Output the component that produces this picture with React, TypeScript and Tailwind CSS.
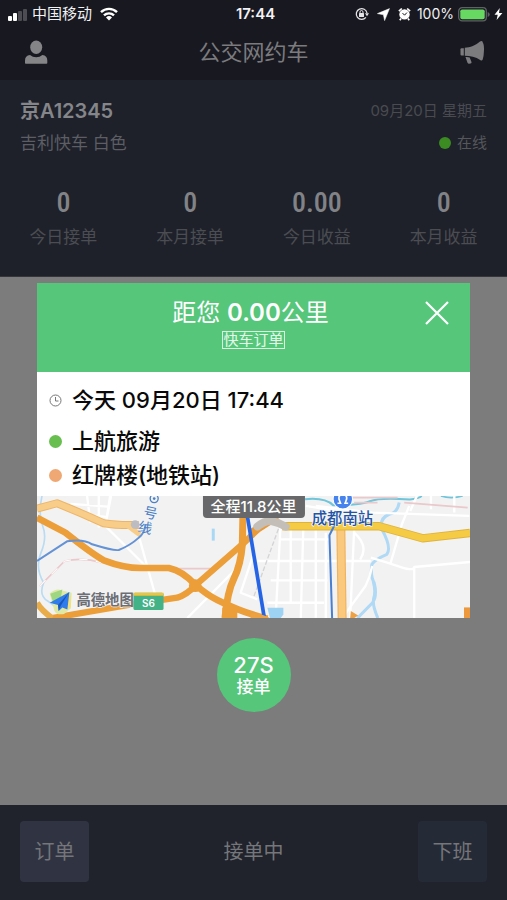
import type { ReactNode } from 'react';

const stats = [
  { value: '0', label: '今日接单' },
  { value: '0', label: '本月接单' },
  { value: '0.00', label: '今日收益' },
  { value: '0', label: '本月收益' },
];

function StatusBar() {
  return (
    <div className="grid h-7 grid-cols-[1fr_auto_1fr] items-center pr-1 pl-2 text-[14px] leading-5 text-[#f1f1f3]">
      <div className="flex items-center">
        <svg width="20" height="13" viewBox="0 0 20 13" aria-hidden="true">
          <rect x="0" y="8" width="4" height="5" rx="1" fill="#fff" />
          <rect x="5" y="5" width="4" height="8" rx="1" fill="#fff" />
          <rect x="10" y="3" width="4" height="10" rx="1" fill="#4c4c52" />
          <rect x="15" y="1" width="4" height="12" rx="1" fill="#4c4c52" />
        </svg>
        <span className="ml-1 text-[15px]">中国移动</span>
        <svg className="ml-2" width="18" height="14" viewBox="0 0 18 14" aria-hidden="true">
          <g fill="none" stroke="#fff" strokeWidth="2.4">
            <path d="M1 5.2a11.3 11.3 0 0 1 16 0" />
            <path d="M4 8.4a7.1 7.1 0 0 1 10 0" />
          </g>
          <path d="M6 10.4a4.3 4.3 0 0 1 6 0L9 13.6Z" fill="#fff" />
        </svg>
      </div>
      <span className="text-[15px] font-semibold">17:44</span>
      <div className="flex items-center justify-end">
        <svg width="14" height="14" viewBox="0 0 14 14" aria-hidden="true">
          <path d="M10.9 10.4A5.4 5.4 0 1 1 12 6" fill="none" stroke="#e4e4e6" strokeWidth="1.3" />
          <path d="M10 6.2h4l-2 3Z" fill="#e4e4e6" />
          <rect x="4" y="6" width="5" height="4" rx=".5" fill="#e4e4e6" />
          <path d="M5 6V5a1.5 1.5 0 0 1 3 0v1" fill="none" stroke="#e4e4e6" />
        </svg>
        <svg className="ml-2" width="13" height="13" viewBox="0 0 13 13" aria-hidden="true">
          <path d="M12.500.6 7.600 12.600 6.400 6.800.4 5.600Z" fill="#fff" stroke="#fff" strokeWidth=".5" />
        </svg>
        <svg className="ml-2" width="13" height="14" viewBox="0 0 13 14" aria-hidden="true">
          <circle cx="6.5" cy="7.4" r="5.2" fill="#fff" />
          <path d="M.9 4.2 3.8 1.5M12.1 4.2 9.2 1.5M3 11.6l-1.2 1.6M10 11.6l1.2 1.6" stroke="#fff" strokeWidth="1.700" />
          <path d="M6.6 8.2 4.5 6.1M6.5 8.2l2.400-2.600" stroke="#181820" strokeWidth="1" />
        </svg>
        <span className="ml-1.5">100%</span>
        <svg className="ml-1" width="32" height="15" viewBox="0 0 32 15" aria-hidden="true">
          <rect x=".7" y=".7" width="27.6" height="13.2" rx="3.4" fill="none" stroke="#606067" strokeWidth="1.3" />
          <rect x="2.3" y="2.4" width="24.4" height="9.8" rx="1.8" fill="#67d963" />
          <path d="M29.7 5v5q2-.8 2-2.5t-2-2.5Z" fill="#606067" />
        </svg>
        <svg className="ml-1" width="9" height="12" viewBox="0 0 9 12" aria-hidden="true">
          <path d="M5.8 0 .5 6.8h3.2L2.6 12l5.8-7.1H5Z" fill="#fff" />
        </svg>
      </div>
    </div>
  );
}

function NavBar() {
  return (
    <header className="grid h-[52px] grid-cols-[1fr_auto_1fr] items-center px-5 pb-1">
      <button type="button" aria-label="个人中心" className="justify-self-start p-1">
        <svg width="24" height="24" viewBox="0 0 24 24" fill="#858587">
          <ellipse cx="12.2" cy="7.2" rx="6" ry="6.7" />
          <path d="M1 23v-2.500Q1 15.600 6 15q2.600 2.300 6.200 2.300T18.400 15q4.900.6 4.900 5.500V23q0 .8-.8.8H1.700Q1 23.800 1 23Z" />
        </svg>
      </button>
      <h1 className="text-[22px] leading-8 text-[#7b7b7e]">公交网约车</h1>
      <button type="button" aria-label="公告" className="justify-self-end">
        <svg width="28" height="24" viewBox="0 0 28 24" fill="#7c7c7f">
          <path d="M2.500 8.200h2.300v7.400H2.500q-1 0-1-1V9.200q0-1 1-1Z" />
          <path d="M5.800 7.800C11 7.800 17 5 21 1.600q2.200-1.300 2.800.8 1.600 2.600 1.100 9.200-.1 5.600-1.300 8.200-.8 1.400-2.400.2C17 17 11 15.800 5.800 15.800Z" />
          <path d="M6.500 17.100q2.600-.2 4.200.3l1.700 4.300q.7 1.600-.9 1.900l-1.500.1q-1 0-1.500-1Z" />
        </svg>
      </button>
    </header>
  );
}

function DriverPanel() {
  return (
    <section className="border-b border-[#35353c] bg-[#1e212a] pt-[17px] pb-[25px]">
      <div className="flex items-center justify-between px-5">
        <h2 className="text-[20px] leading-7 font-semibold text-[#85868a]">京A12345</h2>
        <span className="text-[15px] leading-7 text-[#494b50]">09月20日 星期五</span>
      </div>
      <div className="mt-1 flex items-center justify-between px-5">
        <span className="text-[17px] leading-7 text-[#5c5e64]">吉利快车 白色</span>
        <span className="flex items-center gap-1.5 text-[15px] leading-7 text-[#55575b]">
          <i className="size-3 rounded-full bg-[#3b8a22]" />
          在线
        </span>
      </div>
      <dl className="mt-7 grid grid-cols-4 text-center">
        {stats.map((s) => (
          <div key={s.label} className="flex flex-col-reverse">
            <dt className="text-[17px] leading-7 text-[#4b4d52]">{s.label}</dt>
            <dd className="mb-0.5 font-['Liberation_Sans_Narrow','Roboto_Condensed',Roboto,sans-serif] text-[28px] leading-9 font-medium text-[#828387]">
              {s.value}
            </dd>
          </div>
        ))}
      </dl>
    </section>
  );
}

function RouteMap() {
  return (
    <div className="relative h-[122px] overflow-hidden">
      <svg
        className="size-full"
        viewBox="0 0 1297 366"
        preserveAspectRatio="xMidYMid slice"
        role="img"
        aria-label="路线地图"
      >
        <rect width="1297" height="366" fill="#f2f2f3" />
        <g fill="none" strokeLinejoin="round">
          {/* streams */}
          <path d="M15 0q-12 55 2 90t-5 80 8 90q-16 38 12 55t45 45" stroke="#b9dcf2" strokeWidth="5" />
          <path d="M528 98v36" stroke="#a9d8f5" strokeWidth="9" />
          <path d="M1085 20q-5 30-30 35-30 12-22 45 30 55 15 75-35 15-45 30-5 35 7 55 10 40-5 60l-45 46M1007 255q8 30 2 50t12 61" stroke="#b0d9f5" strokeWidth="9" />
          <path d="M803 10q60-6 84 18 80 0 110-12t120-5q30-4 35-11" stroke="#6fc5da" strokeWidth="6" />
          <path d="M1210 0q30 10 65 0" stroke="#6fc5da" strokeWidth="5" />
          {/* side streets */}
          <g stroke="#fff" strokeWidth="7">
            <path d="M150 0l10 80M185 0v95M222 0l-18 92M100 24l112 8M120 55l90 8M205 90l120 120M305 120l50 180M205 90l14-90M650 170L610 290l50 20M600 215L450 366" />
            <path d="M660 195h340M730 80l-15 280M760 80v240M798 85l-8 281M835 100v265M865 110v256M730 130h145M700 253h170M690 320h170M805 30l125 20M950 100l-12 266M950 110q45 40 18 80" />
            <path d="M835 30l170 20 290 10M1115 30l-22 55-35 120M1000 185q50 15 90 28t40 0l167-15M1138 0l-20 45M1130 213v153M1004 210q-5 30-20 60l-70 96M1180 0v40M1250 0v50" />
          </g>
          <path d="M8 270l75-75q55-12 110 5M420 218h100M900 5h180M1100 20l190 15M950 20h70" stroke="#eac8cb" strokeWidth="5" />
          <path d="M8 270l75-75q55-12 110 5" stroke="#fff" strokeWidth="3" strokeDasharray="25 25" />
          <path d="M730 80l-80 220" stroke="#d4d4d6" strokeWidth="4" strokeDasharray="14 6" />
          {/* avenues */}
          <path d="M0 38l60-16q70 28 140 60 42 7 105 5" stroke="#edb567" strokeWidth="24" />
          <path d="M0 38l60-16q70 28 140 60 42 7 105 5" stroke="#f8cd89" strokeWidth="18" />
          <path d="M270 88l38 28" stroke="#f8cd89" strokeWidth="15" />
          <path d="M910 90l4 276" stroke="#f0b35f" strokeWidth="27" />
          <path d="M910 90l4 276" stroke="#fac97d" strokeWidth="20" />
          <path d="M735 91h290l130 36 142-16" stroke="#dfb33b" strokeWidth="25" />
          <path d="M735 91h290l130 36 142-16" stroke="#f5ca45" strokeWidth="20" />
          {/* expressways */}
          <path d="M0 65l85 45q75 60 115 83 60 23 110 23h85q40 8 80 51 35 30 65 45t62 28 88 28" stroke="#ec9e38" strokeWidth="20" />
          <path d="M45 366l225-39 150-22q30-10 55-38l138-120 47-45" stroke="#ec9e38" strokeWidth="19" />
          <path d="M618 0l-3 147q-5 60-25 100t-27 119" stroke="#ec9e38" strokeWidth="21" />
          <path d="M555 366v-30l25-15 20 20v25Z" fill="#ec9e38" />
          <path d="M617 12l-50-12" stroke="#d0b03a" strokeWidth="15" />
          <path d="M0 320q12 22 45 46" stroke="#e9ac4b" strokeWidth="18" />
          <circle cx="474" cy="269" r="19" fill="#ec9e38" />
          <path d="M640 112l65-42 70-70" stroke="#e99a37" strokeWidth="23" />
          <path d="M660 92q25-20 45-16t40 16" stroke="#c3bfb8" strokeWidth="24" strokeLinecap="round" />
          {/* metro lines */}
          <path d="M0 195l90-59q50-8 75 9 65 20 80 17 35-14 60-37 18-14 20-40" stroke="#6492d4" strokeWidth="6" />
          <path d="M895 80l-19 38 8 248" stroke="#487fd0" strokeWidth="6" />
          {/* planned route */}
          <path d="M620 0l61 366" stroke="#2564e5" strokeWidth="11" />
        </g>
        <circle cx="294" cy="86" r="13" fill="#bdbdc1" />
        <path d="M690 335h48v20l-8 11h-32Z" fill="#9fd3f3" />
        <path d="M640 366v-14q25-4 58 14ZM940 345l22 13-12 8h-12Z" fill="#eda145" />
        <path d="M1279 334h18v32h-18Z" fill="#ed983c" />
        <circle cx="351" cy="8" r="12" fill="none" stroke="#4b80c5" strokeWidth="4" />
        <circle cx="351" cy="8" r="4" fill="#4b80c5" />
        <g transform="rotate(12 345 60)" fill="#4b80c5" className="text-[42px]">
          <text x="317" y="68">号</text>
          <text x="311" y="114">线</text>
        </g>
        <circle cx="916" cy="10" r="29" fill="#4683ed" stroke="#fff" strokeWidth="3" />
        <path d="M900 22h9l-3-8q-6-17 10-18 16 1 10 18l-3 8h9" fill="none" stroke="#fff" strokeWidth="5" />
        <text x="823" y="84" fontWeight="500" fill="#2454a6" stroke="#f8f8f8" strokeWidth="4" paintOrder="stroke" className="text-[46px]">
          成都南站
        </text>
        {/* map provider mark */}
        <path d="M38 292q20-17 36-9l30 7-3 47-20 17q-24 4-29-11Z" fill="#dfe9a4" />
        <path d="M40 293l36-13-6 32-20 12Z" fill="#9ed681" />
        <path d="M78 295l23 4v35l-20 7Z" fill="#f7e075" />
        <path d="M97 288L38 320l25 7 2 18 11-11 15 6Z" fill="#2f7cec" />
        <path d="M97 288L63 327l2 18 6-16Z" fill="#1857bb" />
        <text x="118" y="326" fontWeight="700" fill="#6c6e75" stroke="#f5f5f5" strokeWidth="4" paintOrder="stroke" className="text-[43px]">
          高德地图
        </text>
        <rect x="289" y="290" width="90" height="52" rx="5" fill="#43b286" />
        <path d="M289 290h90v9h-90Z" fill="#f1c33c" />
        <text x="334" y="332" textAnchor="middle" fontWeight="600" fill="#fff" className="text-[30px]">
          S6
        </text>
      </svg>
      <span className="absolute top-0 left-1/2 -translate-x-1/2 rounded-b-sm bg-[#68686a] px-2 text-[15px] leading-[22px] font-medium whitespace-nowrap text-white">
        全程11.8公里
      </span>
    </div>
  );
}

function Stop({ marker, children }: { marker: ReactNode; children: ReactNode }) {
  return (
    <div className="flex items-center gap-2.5 text-[22px] leading-7 font-medium text-[#090909]">
      {marker}
      <span>{children}</span>
    </div>
  );
}

function OrderDialog() {
  return (
    <div role="dialog" aria-label="新订单" className="w-full bg-white">
      <div className="grid h-[89px] grid-cols-[1fr_auto_1fr] items-start bg-[#56c67b] px-5 pt-3 text-white">
        <div className="col-start-2 flex flex-col items-center">
          <p className="pr-1.5 text-[24px] leading-9">
            距您 <strong className="font-semibold">0.00</strong>公里
          </p>
          <span className="border border-[#d9f5e0] text-[15px] leading-4 text-[#e5faea]">快车订单</span>
        </div>
        <button type="button" aria-label="关闭" className="mt-1.5 justify-self-end">
          <svg width="26" height="24" viewBox="0 0 26 24" fill="none" stroke="#fff" strokeWidth="2.200">
            <path d="M2 1l22 22M24 1L2 23" />
          </svg>
        </button>
      </div>
      <div className="px-3 pt-3.5 pb-[7px]">
        <Stop
          marker={
            <svg width="13" height="13" viewBox="0 0 13 13" fill="none" stroke="#777" aria-hidden="true">
              <circle cx="6.500" cy="6.500" r="5.500" />
              <path d="M6.500 3v4h3" />
            </svg>
          }
        >
          今天 09月20日 17:44
        </Stop>
        <div className="mt-[13px] flex flex-col gap-1.5">
          <Stop marker={<i className="size-[13px] rounded-full bg-[#68bf50]" />}>上航旅游</Stop>
          <Stop marker={<i className="size-[13px] rounded-full bg-[#efa873]" />}>红牌楼(地铁站)</Stop>
        </div>
      </div>
      <RouteMap />
    </div>
  );
}

export default function App() {
  return (
    <div className="flex min-h-screen flex-col bg-[#181820] font-[Inter,'Noto_Sans_CJK_SC',sans-serif]">
      <StatusBar />
      <NavBar />
      <DriverPanel />
      <main className="flex flex-1 flex-col items-center bg-[#7c7c7c] px-[37px] pt-1.5">
        <OrderDialog />
        <button
          type="button"
          className="mt-5 flex size-[74px] flex-col items-center justify-center rounded-full bg-[#56c67b] text-white"
        >
          <span className="text-[22px] leading-6 font-medium">27S</span>
          <span className="text-[17px] leading-5 font-medium">接单</span>
        </button>
      </main>
      <footer className="flex h-[95px] items-center justify-between bg-[#20222c] px-5 pb-0.5 text-[20px] text-[#75767a]">
        <button type="button" className="h-[61px] w-[69px] rounded-sm bg-[#303442]">
          订单
        </button>
        <span>接单中</span>
        <button type="button" className="h-[61px] w-[69px] rounded-sm bg-[#252a37]">
          下班
        </button>
      </footer>
    </div>
  );
}
